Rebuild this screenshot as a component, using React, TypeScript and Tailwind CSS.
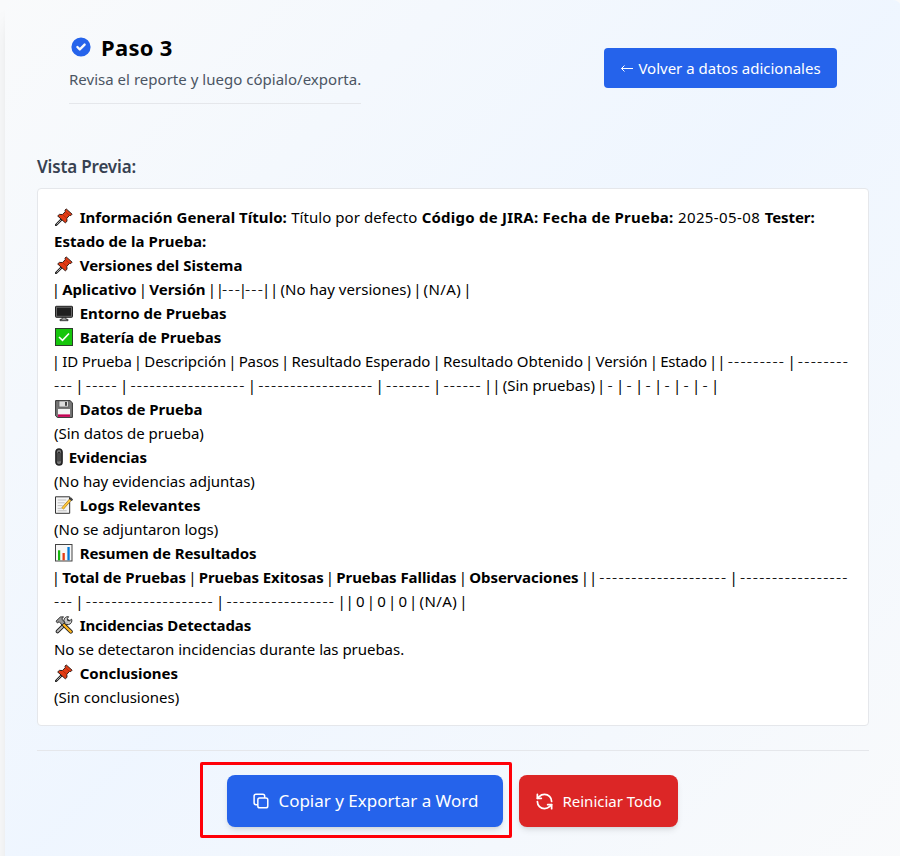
import React from "react";
import { HiCheckCircle } from "react-icons/hi";
import { RefreshCcw } from "lucide-react";

type Kids = { children?: React.ReactNode };

const Row = ({ children }: Kids) => (
  <div className="flex h-6 items-baseline gap-[4.4px] whitespace-pre leading-6">{children}</div>
);
const Title = ({ icon, children, narrow = false }: Kids & { icon: React.ReactNode; narrow?: boolean }) => (
  <Row>
    <span className={narrow ? "flex h-6 w-[10.3px] items-center self-start" : "flex h-6 w-[21.3px] items-center self-start"}>{icon}</span>
    <b>{children}</b>
  </Row>
);
const Bar = () => <span className="w-[3.8px] -indent-[2.25px]">|</span>;
const Dashes = ({ n }: { n: number }) => (
  <span className="text-[16px] font-light leading-6 tracking-[1.25px]">{"-".repeat(n)}</span>
);

const Pin = () => (
  <svg viewBox="0 0 18 18" className="ml-[1px] h-[18px] w-[18px] shrink-0">
    <path d="M6.6 11.4 1 17" stroke="#222" strokeWidth="2.4" strokeLinecap="round" />
    <path d="M6.4 11.6 1.6 16.4" stroke="#aaa" strokeWidth="1" />
    <path d="m11.2.9 5.9 5.3-1.3 1.4-1.3-.2-2.7 2.9.2 3-1.7 1.5L2.7 8l1.7-1.6 3 .1 2.9-2.8-.3-1.5z" fill="#e33b13" stroke="#321d18" strokeWidth="1" strokeLinejoin="round" />
    <path d="m7.4 6.5 4.4 3.8M10.3 3.7l4.2 3.7" stroke="#9f250c" strokeWidth=".7" />
  </svg>
);
const Monitor = () => (
  <svg viewBox="0 0 18 18" className="ml-[1px] h-[18px] w-[18px] shrink-0">
    <rect x=".5" y="2.3" width="17" height="11" rx=".7" fill="#666" stroke="#222" />
    <rect x="2" y="3.8" width="14" height="8" fill="#1f1f1f" />
    <path d="M7 13.4h4v2h2v1.3H5v-1.3h2z" fill="#999" stroke="#222" strokeWidth=".8" />
  </svg>
);
const Check = () => (
  <svg viewBox="0 0 18 18" className="ml-[1px] h-[18px] w-[18px] shrink-0">
    <rect x=".5" y=".5" width="17" height="17" fill="#16c60c" stroke="#2b3d2b" />
    <path d="m4 9 3.5 3.4L14 5.5" fill="none" stroke="#fff" strokeWidth="1.6" />
  </svg>
);
const Floppy = () => (
  <svg viewBox="0 0 18 18" className="ml-[1px] h-[18px] w-[18px] shrink-0">
    <path d="M.6.6H15l2.4 2.2v14.6H2.3L.6 15.8z" fill="#777" stroke="#333" />
    <rect x="4" y="1" width="9.5" height="6" fill="#ddd" stroke="#555" strokeWidth=".7" />
    <rect x="10" y="2" width="2" height="3.8" fill="#444" />
    <rect x="3" y="9" width="12" height="8" fill="#f3f3f3" />
    <rect x="3" y="14.4" width="12" height="2.5" fill="#c30052" />
  </svg>
);
const Clip = () => (
  <svg viewBox="0 0 8 18" className="ml-[1px] h-[18px] w-[8px] shrink-0">
    <rect x="1" y="1" width="6" height="16" rx="3" fill="#777" stroke="#222" strokeWidth="1.7" />
    <path d="M3 13.5V5.2q1-1.8 2 0v8" fill="none" stroke="#222" strokeWidth="1.1" />
  </svg>
);
const Memo = () => (
  <svg viewBox="0 0 18 18" className="ml-[1px] h-[18px] w-[18px] shrink-0">
    <path d="M.5.8h14.2v16.5H.5z" fill="#f5f5f5" stroke="#333" />
    <path d="M2.7 4h8.5M2.7 6.8h7M2.7 9.6h5M2.7 12.4h4.2M2.7 14.8h9" stroke="#bbb" strokeWidth=".9" />
    <path d="m7.5 12.7 7.7-8.8" stroke="#8c6515" strokeWidth="2.8" />
    <path d="m7.5 12.7 7.7-8.8" stroke="#ffc83d" strokeWidth="1.9" />
    <path d="m14.2 2.6 2.6 2.2.8-1.5-1.7-1.6z" fill="#444" stroke="#222" strokeWidth=".7" />
  </svg>
);
const Chart = () => (
  <svg viewBox="0 0 18 18" className="ml-[1px] h-[18px] w-[18px] shrink-0">
    <rect x=".5" y=".5" width="16.5" height="16.5" fill="#f7f7f7" stroke="#444" />
    <rect x="3" y="6.3" width="2.2" height="10" fill="#16b60c" />
    <rect x="7.5" y="9" width="2.3" height="7.3" fill="#e33b13" />
    <rect x="12.4" y="3" width="2.3" height="13.3" fill="#0078d7" />
  </svg>
);
const Tools = () => (
  <svg viewBox="0 0 18 18" className="ml-[1px] h-[18px] w-[18px] shrink-0">
    <path d="M2.6 15.4 13 5.2" stroke="#222" strokeWidth="3.8" strokeLinecap="round" />
    <path d="M16.6 3.2a4 4 0 1 1-3-2.5l-1.3 2 .3 1.8 1.8.4z" fill="#ccc" stroke="#222" strokeWidth=".9" />
    <path d="M2.6 15.4 12.5 5.8" stroke="#bbb" strokeWidth="2" strokeLinecap="round" />
    <path d="m8 8 7.8 7.7" stroke="#222" strokeWidth="4" strokeLinecap="round" />
    <path d="m8 8 7.8 7.7" stroke="#ffb51d" strokeWidth="2.3" strokeLinecap="round" />
    <path d="M1 5.2 5.3 1 8.5.8 6.8 3l3 3.4L7.2 9 4.1 5.7 2.5 7z" fill="#999" stroke="#222" strokeWidth=".9" />
  </svg>
);

const StackIcon = () => (
  <svg viewBox="0 0 24 24" fill="none" stroke="currentColor" strokeWidth="1.8" strokeLinecap="round" strokeLinejoin="round" className="h-5 w-5">
    <path d="M16.5 8.25V6a2.25 2.25 0 0 0-2.25-2.25H6A2.25 2.25 0 0 0 3.75 6v8.25A2.25 2.25 0 0 0 6 16.5h2.25m8.25-8.25H18a2.25 2.25 0 0 1 2.25 2.25V18A2.25 2.25 0 0 1 18 20.25h-7.5A2.25 2.25 0 0 1 8.25 18v-1.5m8.25-8.25h-6a2.25 2.25 0 0 0-2.25 2.25v6" />
  </svg>
);

export default function App() {
  return (
    <div className="h-[856px] overflow-hidden bg-[#f9fafb] pl-[5px] font-['Noto_Sans','Open_Sans',sans-serif] text-[15px] text-black">
      <div className="h-[880px] w-[896px] rounded-lg bg-linear-to-br from-gray-50 via-blue-50 to-gray-50 px-8 shadow-xl">
        <header className="flex h-[156px] items-start justify-between px-8 pt-[34px]">
          <div className="h-[70px] w-[292px] border-b border-gray-200">
            <div className="flex h-7 items-center gap-2">
              <HiCheckCircle className="-mt-0.5 h-6 w-6 text-[#2563eb]" />
              <h1 className="-mt-0.5 text-[22px] font-bold leading-7 tracking-[0.3px]">Paso 3</h1>
            </div>
            <p className="mt-[5px] whitespace-nowrap leading-6 tracking-[0.02px] text-[#4b5563]">Revisa el reporte y luego cópialo/exporta.</p>
          </div>
          <button className="mt-[14px] flex h-10 w-[233px] items-center justify-center gap-1 whitespace-nowrap rounded bg-[#2563eb] text-white">
            <svg viewBox="0 0 14 12" fill="none" stroke="currentColor" className="h-3 w-[14px]"><path d="M13 6.5H1.5M4.5 3.5l-3 3 3 3" /></svg>
            <span>Volver a datos adicionales</span>
          </button>
        </header>
        <h2 className="mb-[10px] text-[17px] font-semibold leading-[22px] tracking-[-0.16px] text-[#374151]">Vista Previa:</h2>
        <section className="h-[538px] rounded border border-gray-200 bg-white p-4">
          <Row>
            <span className="flex h-6 w-[21.3px] items-center self-start"><Pin /></span>
            <b className="tracking-[0.04px]">Información General Título:</b>
            <span className="tracking-[0.05px]">Título por defecto</span>
            <b className="tracking-[0.23px]">Código de JIRA: Fecha de Prueba:</b>
            <span className="tracking-[0.4px]">2025-05-08</span>
            <b className="tracking-[-0.08px]">Tester:</b>
          </Row>
          <Row><b className="tracking-[0.05px]">Estado de la Prueba:</b></Row>
          <Title icon={<Pin />}>Versiones del Sistema</Title>
          <Row>
            <Bar /><b>Aplicativo</b><Bar /><b>Versión</b><Bar />
            <span className="flex items-baseline"><Bar /><Dashes n={3} /><Bar /><Dashes n={3} /><Bar /></span>
            <Bar /><span className="tracking-[0.03px]">(No hay versiones)</span><Bar /><span className="tracking-[0.4px]">(N/A)</span><Bar />
          </Row>
          <Title icon={<Monitor />}>Entorno de Pruebas</Title>
          <Title icon={<Check />}>Batería de Pruebas</Title>
          <Row>
            <Bar /><span className="tracking-[-0.12px]">ID Prueba</span><Bar /><span className="tracking-[-0.06px]">Descripción</span><Bar /><span className="tracking-[-0.15px]">Pasos</span><Bar />
            <span className="tracking-[-0.06px]">Resultado Esperado</span><Bar /><span className="tracking-[-0.02px]">Resultado Obtenido</span><Bar />
            <span className="tracking-[-0.11px]">Versión</span><Bar /><span className="tracking-[-0.15px]">Estado</span><Bar /><Bar /><Dashes n={9} /><Bar /><Dashes n={8} />
          </Row>
          <Row>
            <Dashes n={3} /><Bar /><Dashes n={5} /><Bar /><Dashes n={18} /><Bar /><Dashes n={18} /><Bar />
            <Dashes n={7} /><Bar /><Dashes n={6} /><Bar /><Bar /><span>(Sin pruebas)</span><Bar />
            <Dashes n={1} /><Bar /><Dashes n={1} /><Bar /><Dashes n={1} /><Bar /><Dashes n={1} /><Bar /><Dashes n={1} /><Bar /><Dashes n={1} /><Bar />
          </Row>
          <Title icon={<Floppy />}>Datos de Prueba</Title>
          <Row><span>(Sin datos de prueba)</span></Row>
          <Title narrow icon={<Clip />}>Evidencias</Title>
          <Row><span>(No hay evidencias adjuntas)</span></Row>
          <Title icon={<Memo />}>Logs Relevantes</Title>
          <Row><span>(No se adjuntaron logs)</span></Row>
          <Title icon={<Chart />}><span className="tracking-[-0.06px]">Resumen de Resultados</span></Title>
          <Row>
            <Bar /><b>Total de Pruebas</b><Bar /><b className="tracking-[-0.07px]">Pruebas Exitosas</b><Bar />
            <b className="tracking-[-0.06px]">Pruebas Fallidas</b><Bar /><b className="tracking-[-0.04px]">Observaciones</b><Bar /><Bar /><Dashes n={20} /><Bar /><Dashes n={17} />
          </Row>
          <Row>
            <Dashes n={3} /><Bar /><Dashes n={20} /><Bar /><Dashes n={17} /><Bar /><Bar /><span>0</span><Bar /><span>0</span><Bar /><span>0</span><Bar />
            <span className="tracking-[0.4px]">(N/A)</span><Bar />
          </Row>
          <Title icon={<Tools />}><span className="tracking-[-0.08px]">Incidencias Detectadas</span></Title>
          <Row><span className="tracking-[-0.03px]">No se detectaron incidencias durante las pruebas.</span></Row>
          <Title icon={<Pin />}>Conclusiones</Title>
          <Row><span>(Sin conclusiones)</span></Row>
        </section>
        <footer className="relative mt-6 flex justify-center gap-4 border-t border-gray-200 pr-0.5 pt-6">
          <button className="flex h-[52px] w-[276px] items-center gap-2 whitespace-nowrap rounded-lg bg-[#2563eb] px-6 text-[17px] text-white shadow-md">
            <StackIcon />
            <span>Copiar y Exportar a Word</span>
          </button>
          <button className="flex h-[52px] w-[159px] items-center gap-2 whitespace-nowrap rounded-lg bg-[#dc2626] px-4 text-white shadow-md">
            <span className="flex w-5 justify-center"><RefreshCcw size={19} strokeWidth={2.2} /></span>
            <span>Reiniciar Todo</span>
          </button>
          <div className="absolute left-[163px] top-[11px] h-[76px] w-[312px] rounded-xs border-3 border-[#ff0008]" />
        </footer>
      </div>
    </div>
  );
}
